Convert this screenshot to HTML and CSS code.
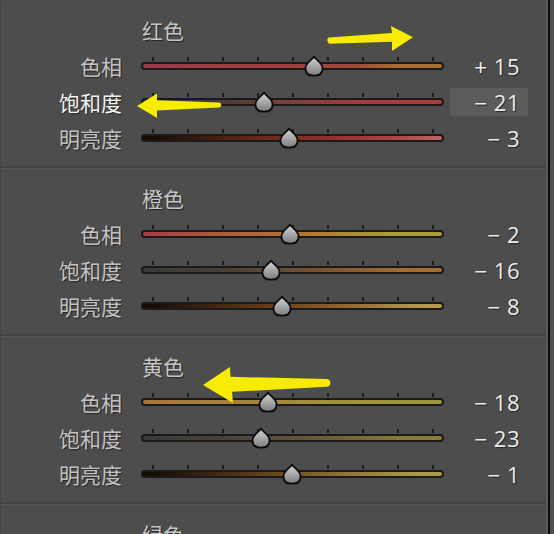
FILE: index.html
```html
<!DOCTYPE html>
<html lang="zh">
<head>
<meta charset="utf-8">
<title>HSL</title>
<link rel="stylesheet" href="styles.css">
</head>
<body>
<div class="frame">
  <div class="panel">
    <section class="group">
      <h2 class="group-title">红色</h2>
      <div class="row">
        <span class="label">色相</span>
        <div class="slider"><div class="ticks"><i></i><i></i><i></i><i></i><i></i><i></i><i></i><i></i><i></i></div><div class="track t-red-hue"></div><svg class="thumb" style="--v:15" viewBox="0 0 20 22"><use href="#thumb"/></svg></div>
        <span class="value"><span class="sign">+</span> 15</span>
      </div>
      <div class="row">
        <span class="label active">饱和度</span>
        <div class="slider"><div class="ticks"><i></i><i></i><i></i><i></i><i></i><i></i><i></i><i></i><i></i></div><div class="track t-red-sat"></div><svg class="thumb" style="--v:-21" viewBox="0 0 20 22"><use href="#thumb"/></svg></div>
        <span class="value selected"><span class="sign">−</span> 21</span>
      </div>
      <div class="row">
        <span class="label">明亮度</span>
        <div class="slider"><div class="ticks"><i></i><i></i><i></i><i></i><i></i><i></i><i></i><i></i><i></i></div><div class="track t-red-lum"></div><svg class="thumb" style="--v:-3" viewBox="0 0 20 22"><use href="#thumb"/></svg></div>
        <span class="value"><span class="sign">−</span> 3</span>
      </div>
    </section>
    <section class="group">
      <h2 class="group-title">橙色</h2>
      <div class="row">
        <span class="label">色相</span>
        <div class="slider"><div class="ticks"><i></i><i></i><i></i><i></i><i></i><i></i><i></i><i></i><i></i></div><div class="track t-or-hue"></div><svg class="thumb" style="--v:-2" viewBox="0 0 20 22"><use href="#thumb"/></svg></div>
        <span class="value"><span class="sign">−</span> 2</span>
      </div>
      <div class="row">
        <span class="label">饱和度</span>
        <div class="slider"><div class="ticks"><i></i><i></i><i></i><i></i><i></i><i></i><i></i><i></i><i></i></div><div class="track t-or-sat"></div><svg class="thumb" style="--v:-16" viewBox="0 0 20 22"><use href="#thumb"/></svg></div>
        <span class="value"><span class="sign">−</span> 16</span>
      </div>
      <div class="row">
        <span class="label">明亮度</span>
        <div class="slider"><div class="ticks"><i></i><i></i><i></i><i></i><i></i><i></i><i></i><i></i><i></i></div><div class="track t-or-lum"></div><svg class="thumb" style="--v:-8" viewBox="0 0 20 22"><use href="#thumb"/></svg></div>
        <span class="value"><span class="sign">−</span> 8</span>
      </div>
    </section>
    <section class="group">
      <h2 class="group-title">黄色</h2>
      <div class="row">
        <span class="label">色相</span>
        <div class="slider"><div class="ticks"><i></i><i></i><i></i><i></i><i></i><i></i><i></i><i></i><i></i></div><div class="track t-ye-hue"></div><svg class="thumb" style="--v:-18" viewBox="0 0 20 22"><use href="#thumb"/></svg></div>
        <span class="value"><span class="sign">−</span> 18</span>
      </div>
      <div class="row">
        <span class="label">饱和度</span>
        <div class="slider"><div class="ticks"><i></i><i></i><i></i><i></i><i></i><i></i><i></i><i></i><i></i></div><div class="track t-ye-sat"></div><svg class="thumb" style="--v:-23" viewBox="0 0 20 22"><use href="#thumb"/></svg></div>
        <span class="value"><span class="sign">−</span> 23</span>
      </div>
      <div class="row">
        <span class="label">明亮度</span>
        <div class="slider"><div class="ticks"><i></i><i></i><i></i><i></i><i></i><i></i><i></i><i></i><i></i></div><div class="track t-ye-lum"></div><svg class="thumb" style="--v:-1" viewBox="0 0 20 22"><use href="#thumb"/></svg></div>
        <span class="value"><span class="sign">−</span> 1</span>
      </div>
    </section>
    <section class="group">
      <h2 class="group-title">绿色</h2>
    </section>
  </div>
</div>

<svg class="defs" width="0" height="0" aria-hidden="true">
  <defs>
    <linearGradient id="thumbfill" x1="0" y1="0" x2="0" y2="1">
      <stop offset="0" stop-color="#d6d6d6"/>
      <stop offset="0.5" stop-color="#a8a8a8"/>
      <stop offset="1" stop-color="#7c7c7c"/>
    </linearGradient>
    <symbol id="thumb" viewBox="0 0 20 22">
      <path d="M10 1.6 C11.6 4.6 18.6 7.8 18.6 13.4 C18.6 18.2 15 20.6 10 20.6 C5 20.6 1.4 18.2 1.4 13.4 C1.4 7.8 8.4 4.6 10 1.6 Z" fill="url(#thumbfill)" stroke="#0c0c0c" stroke-width="1.9" stroke-linejoin="round"/>
    </symbol>
  </defs>
</svg>

<svg class="arrows" width="554" height="534" viewBox="0 0 554 534" aria-hidden="true">
  <path d="M329 37.6 L392 33 L391 26 L413 37.3 L392 51 L392 41.8 L330 43.8 C327 43.6 326.5 37.8 329 37.6 Z" fill="#f7ec00"/>
  <path d="M137 106 L157 93.6 L157 100.2 L219 102.6 C222 102.8 222 107.4 219 107.5 L157 110.4 L157 118 Z" fill="#f7ec00"/>
  <path d="M203 385 L230 367 L230.5 376.8 L327 379 C331.5 379.3 331.5 386.6 327 386.8 L232 391.8 L233 403 Z" fill="#f7ec00"/>
</svg>
</body>
</html>
```

FILE: styles.css
```css
html, body {
  margin: 0;
  padding: 0;
  overflow: hidden;
  background: #515151;
  height: 100%;
}

.frame {
  width: 550px;
  height: 100%;
  display: flex;
}

.panel {
  width: 545px;
  background: #4d4d4d;
  border-left: 1px dotted #3c3c3c;
  border-right: 2px solid #5a5a5a;
  box-shadow: 2px 0 0 #0b0b0b;
}

.group {
  padding: 16px 0 10px 0;
  border-bottom: 2px solid #454545;
  box-shadow: 0 1px 0 #555;
}

.group-title {
  margin: 0 0 4px 0;
  padding-left: 141px;
  height: 28px;
  line-height: 28px;
  font-family: "Noto Sans CJK SC", "Noto Sans", sans-serif;
  font-size: 21px;
  font-weight: 400;
  color: #c6c6c6;
  text-shadow: 1px 1px 1px #262626;
}

.row {
  display: flex;
  align-items: center;
  height: 36px;
}

.label {
  width: 121px;
  text-align: right;
  font-family: "Noto Sans CJK SC", "Noto Sans", sans-serif;
  font-size: 21px;
  line-height: 36px;
  color: #c2c2c2;
  text-shadow: 1px 1px 1px #262626;
}

.label.active {
  color: #f4f4f4;
}

.slider {
  position: relative;
  width: 303px;
  margin-left: 19px;
  display: flex;
  flex-direction: column;
  padding-bottom: 5px;
}

.ticks {
  display: flex;
  justify-content: space-between;
  padding: 0 10px 0 11px;
  height: 4px;
  margin-bottom: 1px;
}

.ticks i {
  display: block;
  width: 2px;
  height: 4px;
  background: #1c1c1c;
}

.track {
  height: 4px;
  border: 2px solid #1a1a1a;
  border-radius: 5px;
}

.t-red-hue { background: linear-gradient(to right, #9c3b48 0%, #a23c40 45%, #a04a38 70%, #a86e30 85%, #a8702f 100%); }
.t-red-sat { background: linear-gradient(to right, #3a3a3a 0%, #4a3a36 25%, #80403a 50%, #ac3a3a 75%, #b03a3a 100%); }
.t-red-lum { background: linear-gradient(to right, #0a0a0a 0%, #3a1c10 20%, #6a2a18 40%, #9a3030 65%, #b04848 85%, #c06464 100%); }
.t-or-hue  { background: linear-gradient(to right, #a83c46 0%, #b0603a 30%, #b2782e 55%, #a89a34 80%, #a8a034 100%); }
.t-or-sat  { background: linear-gradient(to right, #3a3a3a 0%, #4c4034 30%, #7a5432 60%, #a46a30 85%, #a86c30 100%); }
.t-or-lum  { background: linear-gradient(to right, #0a0a0a 0%, #3e2410 22%, #703e18 45%, #9a6a34 70%, #b09048 88%, #b8a050 100%); }
.t-ye-hue  { background: linear-gradient(to right, #a87436 0%, #a8823a 30%, #a09236 60%, #9c9636 100%); }
.t-ye-sat  { background: linear-gradient(to right, #3a3a3a 0%, #4a4238 30%, #6e5c38 60%, #8a7834 85%, #8e7e34 100%); }
.t-ye-lum  { background: linear-gradient(to right, #0a0a0a 0%, #3a2410 22%, #6a4a20 45%, #907a38 70%, #a89844 90%, #aa9a48 100%); }

.thumb {
  position: absolute;
  top: -2px;
  left: calc(142px + var(--v) * 1.4px);
  width: 20px;
  height: 22px;
}

.value {
  width: 70px;
  margin-left: 6px;
  padding-right: 8px;
  height: 28px;
  line-height: 28px;
  text-align: right;
  font-family: "Open Sans", "Noto Sans", sans-serif;
  font-size: 22px;
  letter-spacing: 0.5px;
  color: #ececec;
  text-shadow: 1px 1px 1px #262626;
  white-space: nowrap;
}

.sign {
  font-family: "Liberation Sans", sans-serif;
  font-weight: 300;
}

.value.selected {
  background: #5c5c5c;
}

.defs {
  position: absolute;
  width: 0;
  height: 0;
}

.arrows {
  position: absolute;
  left: 0;
  top: 0;
  pointer-events: none;
}
```
